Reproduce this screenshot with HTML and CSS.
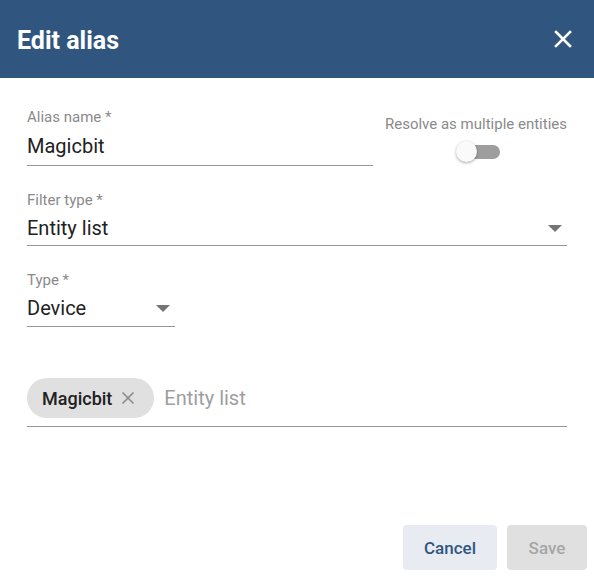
FILE: index.html
```html
<!DOCTYPE html>
<html>
<head>
<meta charset="utf-8">
<link rel="stylesheet" href="styles.css">
</head>
<body>
<div class="dialog">
  <header class="header">
    <h1 class="title">Edit alias</h1>
    <button class="close" aria-label="Close">
      <svg width="18" height="18" viewBox="0 0 18 18"><path d="M2 2L16 16M16 2L2 16" stroke="#fff" stroke-width="2.6" stroke-linecap="square"/></svg>
    </button>
  </header>
  <main class="content">
    <div class="row1">
      <div class="field alias">
        <div class="label">Alias name *</div>
        <div class="value">Magicbit</div>
      </div>
      <div class="toggle-block">
        <div class="toggle-label">Resolve as multiple entities</div>
        <div class="toggle"><span class="track"></span><span class="thumb"></span></div>
      </div>
    </div>
    <div class="field filter">
      <div class="label">Filter type *</div>
      <div class="value select">Entity list<span class="arrow"></span></div>
    </div>
    <div class="field type">
      <div class="label">Type *</div>
      <div class="value select">Device<span class="arrow"></span></div>
    </div>
    <div class="chips">
      <span class="chip">Magicbit
        <svg class="chip-x" width="14" height="14" viewBox="0 0 14 14"><path d="M1.5 1.5L12.5 12.5M12.5 1.5L1.5 12.5" stroke="#8a8a8a" stroke-width="1.6"/></svg>
      </span>
      <span class="placeholder">Entity list</span>
    </div>
  </main>
  <footer class="actions">
    <button class="btn cancel">Cancel</button>
    <button class="btn save">Save</button>
  </footer>
</div>
</body>
</html>
```
FILE: styles.css
```css
* { box-sizing: border-box; }
html, body { margin: 0; padding: 0; background: #fff; }
body { font-family: Roboto, "Noto Sans", sans-serif; width: 594px; height: 578px; overflow: hidden; }
.dialog { width: 594px; height: 578px; display: flex; flex-direction: column; }
.header { height: 78px; background: #305680; display: flex; align-items: center; justify-content: space-between; padding: 0 22px 0 17px; }
.title { margin: 0; color: #fff; font-size: 25px; font-weight: 700; letter-spacing: 0; padding-top: 2px; }
.close { background: none; border: 0; padding: 0; width: 18px; height: 18px; display: flex; }
.content { padding: 31px 27px 0 27px; flex: 1; }
.row1 { display: flex; justify-content: space-between; }
.field { border-bottom: 1px solid #949494; }
.label { font-size: 15px; line-height: 16px; color: #8a8a8a; }
.value { font-size: 20px; line-height: 24px; color: #212121; margin-top: 9px; padding-bottom: 7px; display: flex; align-items: center; justify-content: space-between; }
.alias { width: 346px; }
.filter { margin-top: 26px; }
.filter .value { margin-top: 8px; padding-bottom: 5px; }
.type { margin-top: 26px; width: 148px; }
.type .value { margin-top: 8px; padding-bottom: 6px; }
.arrow { width: 0; height: 0; border-left: 7px solid transparent; border-right: 7px solid transparent; border-top: 7px solid #757575; margin-right: 5px; }
.toggle-block { display: flex; flex-direction: column; align-items: center; padding-top: 7px; }
.toggle-label { font-size: 15px; line-height: 16px; color: #8a8a8a; }
.toggle { position: relative; width: 44px; height: 24px; margin-top: 8px; margin-left: 4px; }
.track { position: absolute; left: 10px; top: 5px; width: 34px; height: 14px; border-radius: 7px; background: #9e9e9e; }
.thumb { position: absolute; left: 0; top: 1px; width: 21px; height: 21px; border-radius: 50%; background: #fafafa; box-shadow: 0 1px 3px rgba(0,0,0,.35); }
.chips { margin-top: 51px; display: flex; align-items: center; border-bottom: 1px solid #949494; padding-bottom: 8px; }
.chip { height: 40px; border-radius: 20px; background: #e0e0e0; display: inline-flex; align-items: center; padding: 0 19px 0 15px; font-size: 18px; font-weight: 500; color: #212121; gap: 9px; }
.chip-x { display: block; }
.placeholder { margin-left: 10px; font-size: 20px; color: #9e9e9e; }
.actions { display: flex; justify-content: flex-end; gap: 10px; padding: 0 7px 8px 0; }
.btn { height: 45px; border: 0; border-radius: 4px; font-family: Roboto, sans-serif; font-size: 17px; font-weight: 500; }
.cancel { width: 94px; background: #e8ecf2; color: #305680; }
.save { width: 80px; background: #e0e0e0; color: #a6a6a6; }
```
